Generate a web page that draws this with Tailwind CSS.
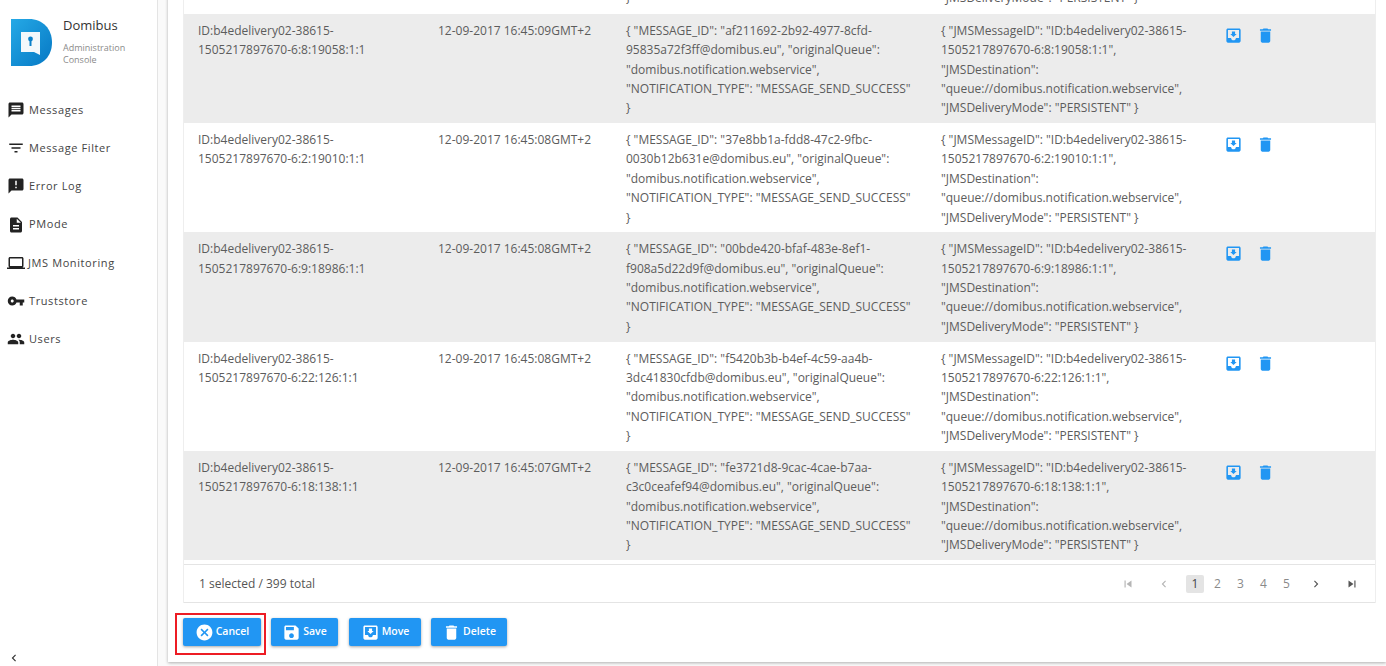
<!DOCTYPE html>
<html lang="en">

<head>
    <meta charset="UTF-8">
    <title>Domibus - JMS Monitoring</title>
    <script src="https://cdn.jsdelivr.net/npm/@tailwindcss/browser@4"></script>
</head>

<body class="flex h-screen overflow-hidden bg-white font-['Open_Sans',sans-serif] text-[12px] text-[#5c5c5c]">
    <!-- sidebar -->
    <aside class="flex flex-col w-[158px] shrink-0 h-full bg-white border-r border-[#e4e4e4]">
        <div class="flex pl-[11px] pt-[19px] h-[91px]">
            <svg class="w-[41px] h-[47px] shrink-0" viewBox="0 0 41 47">
                <defs>
                    <linearGradient id="logo" x1="0" y1="0" x2="1" y2="1">
                        <stop offset="0" stop-color="#25a9e6" />
                        <stop offset="1" stop-color="#0678c4" />
                    </linearGradient>
                </defs>
                <path d="M0 0H18C32 0 41 10 41 23.5S32 47 18 47H0Z" fill="url(#logo)" />
                <path d="M10 13H29V36L23 33H10Z" fill="#f4f8fb" />
                <circle cx="19.5" cy="20" r="2.4" fill="#0b80c9" />
                <rect x="18.5" y="21" width="2" height="6" fill="#0b80c9" />
            </svg>
            <div class="ml-[11px]">
                <p class="text-[13px] leading-[16px] mt-[-2px] text-[#333]">Domibus</p>
                <p class="text-[9px] leading-[12px] mt-[9px] text-[#8a8a8a]">Administration<br>Console</p>
            </div>
        </div>
        <nav class="flex flex-col text-[11px] tracking-[0.6px] text-[#444]">
            <a class="flex items-center h-[38.2px] pl-[7px] gap-[4px]"><svg class="w-[18px] h-[18px] fill-[#222]" viewBox="0 0 24 24"><path d="M20 2H4c-1.1 0-1.99.9-1.99 2L2 22l4-4h14c1.1 0 2-.9 2-2V4c0-1.1-.9-2-2-2zm-2 12H6v-2h12v2zm0-3H6V9h12v2zm0-3H6V6h12v2z" /></svg>Messages</a>
            <a class="flex items-center h-[38.2px] pl-[7px] gap-[4px]"><svg class="w-[18px] h-[18px] fill-[#222]" viewBox="0 0 24 24"><path d="M10 18h4v-2h-4v2zM3 6v2h18V6H3zm3 7h12v-2H6v2z" /></svg>Message Filter</a>
            <a class="flex items-center h-[38.2px] pl-[7px] gap-[4px]"><svg class="w-[18px] h-[18px] fill-[#222]" viewBox="0 0 24 24"><path d="M20 2H4c-1.1 0-1.99.9-1.99 2L2 22l4-4h14c1.1 0 2-.9 2-2V4c0-1.1-.9-2-2-2zm-7 9h-2V5h2v6zm0 4h-2v-2h2v2z" /></svg>Error Log</a>
            <a class="flex items-center h-[38.2px] pl-[7px] gap-[4px]"><svg class="w-[18px] h-[18px] fill-[#222]" viewBox="0 0 24 24"><path d="M14 2H6c-1.1 0-1.99.9-1.99 2L4 20c0 1.1.89 2 1.99 2H18c1.1 0 2-.9 2-2V8l-6-6zm2 16H8v-2h8v2zm0-4H8v-2h8v2zm-3-5V3.5L18.5 9H13z" /></svg>PMode</a>
            <a class="flex items-center h-[38.2px] pl-[7px] gap-[3px]"><svg class="w-[18px] h-[18px] fill-[#222]" viewBox="0 0 24 24"><path d="M20 18c1.1 0 1.99-.9 1.99-2L22 6c0-1.1-.9-2-2-2H4c-1.1 0-2 .9-2 2v10c0 1.1.9 2 2 2H0v2h24v-2h-4zM4 6h16v10H4V6z" /></svg>JMS Monitoring</a>
            <a class="flex items-center h-[38.2px] pl-[7px] gap-[4px]"><svg class="w-[18px] h-[18px] fill-[#222]" viewBox="0 0 24 24"><path d="M12.65 10C11.83 7.67 9.61 6 7 6c-3.31 0-6 2.69-6 6s2.69 6 6 6c2.61 0 4.83-1.67 5.65-4H17v4h4v-4h2v-4H12.65zM7 14c-1.1 0-2-.9-2-2s.9-2 2-2 2 .9 2 2-.9 2-2 2z" /></svg>Truststore</a>
            <a class="flex items-center h-[38.2px] pl-[7px] gap-[4px]"><svg class="w-[18px] h-[18px] fill-[#222]" viewBox="0 0 24 24"><path d="M16 11c1.66 0 2.99-1.34 2.99-3S17.66 5 16 5c-1.66 0-3 1.34-3 3s1.34 3 3 3zm-8 0c1.66 0 2.99-1.34 2.99-3S9.66 5 8 5C6.34 5 5 6.34 5 8s1.34 3 3 3zm0 2c-2.33 0-7 1.17-7 3.5V19h14v-2.5c0-2.33-4.67-3.5-7-3.5zm8 0c-.29 0-.62.02-.97.05 1.16.84 1.97 1.97 1.97 3.45V19h6v-2.5c0-2.33-4.67-3.5-7-3.5z" /></svg>Users</a>
        </nav>
        <div class="mt-auto pl-[7px] pb-[1px]">
            <svg class="w-[14px] h-[14px] fill-[#333]" viewBox="0 0 24 24"><path d="M15.41 7.41L14 6l-6 6 6 6 1.41-1.41L10.83 12z" /></svg>
        </div>
    </aside>

    <!-- content, scrolled to the bottom -->
    <main class="flex-1 min-w-0 flex flex-col justify-end pl-[10px] pb-[4px] bg-[#fafafa]">
        <div class="bg-white shadow-[0_1px_3px_rgba(0,0,0,0.3)] pl-[15px] pr-[10px] pb-[16px]">
            <div class="border-l border-r border-[#eeeeee] leading-[19.4px]">
                <div class="grid grid-cols-[239px_188px_315px_286px_1fr] h-[25.5px] pb-[6px] items-end">
                    <div></div>
                    <div></div>
                    <div class="px-[15px]">}</div>
                    <div class="px-[15px] whitespace-nowrap">"JMSDeliveryMode": "PERSISTENT" }</div>
                    <div></div>
                </div>

                <div class="grid grid-cols-[239px_188px_315px_286px_1fr] pt-[7px] h-[109.25px] bg-[#ececec]">
                    <div class="pl-[14px]">ID:b4edelivery02-38615-<br>1505217897670-6:8:19058:1:1</div>
                    <div class="px-[15px]">12-09-2017 16:45:09GMT+2</div>
                    <div class="px-[15px]">{ "MESSAGE_ID": "af211692-2b92-4977-8cfd-<br>95835a72f3ff@domibus.eu", "originalQueue":<br>"domibus.notification.webservice",<br>"NOTIFICATION_TYPE": "MESSAGE_SEND_SUCCESS"<br>}</div>
                    <div class="px-[15px]">{ "JMSMessageID": "ID:b4edelivery02-38615-<br>1505217897670-6:8:19058:1:1",<br>"JMSDestination":<br>"queue://domibus.notification.webservice",<br>"JMSDeliveryMode": "PERSISTENT" }</div>
                    <div class="flex gap-[13px] pl-[12px] pt-[5px]">
                        <svg class="w-[19px] h-[19px] fill-[#2196f3]" viewBox="0 0 24 24"><path d="M19 3H4.99c-1.11 0-1.98.9-1.98 2L3 19c0 1.1.88 2 1.99 2H19c1.1 0 2-.9 2-2V5c0-1.1-.9-2-2-2zm0 12h-4c0 1.66-1.35 3-3 3s-3-1.34-3-3H4.99V5H19v10zm-3-5h-2V7h-4v3H8l4 4 4-4z" /></svg>
                        <svg class="w-[19px] h-[19px] fill-[#2196f3]" viewBox="0 0 24 24"><path d="M6 19c0 1.1.9 2 2 2h8c1.1 0 2-.9 2-2V7H6v12zM19 4h-3.5l-1-1h-5l-1 1H5v2h14V4z" /></svg>
                    </div>
                </div>

                <div class="grid grid-cols-[239px_188px_315px_286px_1fr] pt-[7px] h-[109.25px] bg-white">
                    <div class="pl-[14px]">ID:b4edelivery02-38615-<br>1505217897670-6:2:19010:1:1</div>
                    <div class="px-[15px]">12-09-2017 16:45:08GMT+2</div>
                    <div class="px-[15px]">{ "MESSAGE_ID": "37e8bb1a-fdd8-47c2-9fbc-<br>0030b12b631e@domibus.eu", "originalQueue":<br>"domibus.notification.webservice",<br>"NOTIFICATION_TYPE": "MESSAGE_SEND_SUCCESS"<br>}</div>
                    <div class="px-[15px]">{ "JMSMessageID": "ID:b4edelivery02-38615-<br>1505217897670-6:2:19010:1:1",<br>"JMSDestination":<br>"queue://domibus.notification.webservice",<br>"JMSDeliveryMode": "PERSISTENT" }</div>
                    <div class="flex gap-[13px] pl-[12px] pt-[5px]">
                        <svg class="w-[19px] h-[19px] fill-[#2196f3]" viewBox="0 0 24 24"><path d="M19 3H4.99c-1.11 0-1.98.9-1.98 2L3 19c0 1.1.88 2 1.99 2H19c1.1 0 2-.9 2-2V5c0-1.1-.9-2-2-2zm0 12h-4c0 1.66-1.35 3-3 3s-3-1.34-3-3H4.99V5H19v10zm-3-5h-2V7h-4v3H8l4 4 4-4z" /></svg>
                        <svg class="w-[19px] h-[19px] fill-[#2196f3]" viewBox="0 0 24 24"><path d="M6 19c0 1.1.9 2 2 2h8c1.1 0 2-.9 2-2V7H6v12zM19 4h-3.5l-1-1h-5l-1 1H5v2h14V4z" /></svg>
                    </div>
                </div>

                <div class="grid grid-cols-[239px_188px_315px_286px_1fr] pt-[7px] h-[109.25px] bg-[#ececec]">
                    <div class="pl-[14px]">ID:b4edelivery02-38615-<br>1505217897670-6:9:18986:1:1</div>
                    <div class="px-[15px]">12-09-2017 16:45:08GMT+2</div>
                    <div class="px-[15px]">{ "MESSAGE_ID": "00bde420-bfaf-483e-8ef1-<br>f908a5d22d9f@domibus.eu", "originalQueue":<br>"domibus.notification.webservice",<br>"NOTIFICATION_TYPE": "MESSAGE_SEND_SUCCESS"<br>}</div>
                    <div class="px-[15px]">{ "JMSMessageID": "ID:b4edelivery02-38615-<br>1505217897670-6:9:18986:1:1",<br>"JMSDestination":<br>"queue://domibus.notification.webservice",<br>"JMSDeliveryMode": "PERSISTENT" }</div>
                    <div class="flex gap-[13px] pl-[12px] pt-[5px]">
                        <svg class="w-[19px] h-[19px] fill-[#2196f3]" viewBox="0 0 24 24"><path d="M19 3H4.99c-1.11 0-1.98.9-1.98 2L3 19c0 1.1.88 2 1.99 2H19c1.1 0 2-.9 2-2V5c0-1.1-.9-2-2-2zm0 12h-4c0 1.66-1.35 3-3 3s-3-1.34-3-3H4.99V5H19v10zm-3-5h-2V7h-4v3H8l4 4 4-4z" /></svg>
                        <svg class="w-[19px] h-[19px] fill-[#2196f3]" viewBox="0 0 24 24"><path d="M6 19c0 1.1.9 2 2 2h8c1.1 0 2-.9 2-2V7H6v12zM19 4h-3.5l-1-1h-5l-1 1H5v2h14V4z" /></svg>
                    </div>
                </div>

                <div class="grid grid-cols-[239px_188px_315px_286px_1fr] pt-[7px] h-[109.25px] bg-white">
                    <div class="pl-[14px]">ID:b4edelivery02-38615-<br>1505217897670-6:22:126:1:1</div>
                    <div class="px-[15px]">12-09-2017 16:45:08GMT+2</div>
                    <div class="px-[15px]">{ "MESSAGE_ID": "f5420b3b-b4ef-4c59-aa4b-<br>3dc41830cfdb@domibus.eu", "originalQueue":<br>"domibus.notification.webservice",<br>"NOTIFICATION_TYPE": "MESSAGE_SEND_SUCCESS"<br>}</div>
                    <div class="px-[15px]">{ "JMSMessageID": "ID:b4edelivery02-38615-<br>1505217897670-6:22:126:1:1",<br>"JMSDestination":<br>"queue://domibus.notification.webservice",<br>"JMSDeliveryMode": "PERSISTENT" }</div>
                    <div class="flex gap-[13px] pl-[12px] pt-[5px]">
                        <svg class="w-[19px] h-[19px] fill-[#2196f3]" viewBox="0 0 24 24"><path d="M19 3H4.99c-1.11 0-1.98.9-1.98 2L3 19c0 1.1.88 2 1.99 2H19c1.1 0 2-.9 2-2V5c0-1.1-.9-2-2-2zm0 12h-4c0 1.66-1.35 3-3 3s-3-1.34-3-3H4.99V5H19v10zm-3-5h-2V7h-4v3H8l4 4 4-4z" /></svg>
                        <svg class="w-[19px] h-[19px] fill-[#2196f3]" viewBox="0 0 24 24"><path d="M6 19c0 1.1.9 2 2 2h8c1.1 0 2-.9 2-2V7H6v12zM19 4h-3.5l-1-1h-5l-1 1H5v2h14V4z" /></svg>
                    </div>
                </div>

                <div class="grid grid-cols-[239px_188px_315px_286px_1fr] pt-[7px] h-[109.25px] bg-[#ececec]">
                    <div class="pl-[14px]">ID:b4edelivery02-38615-<br>1505217897670-6:18:138:1:1</div>
                    <div class="px-[15px]">12-09-2017 16:45:07GMT+2</div>
                    <div class="px-[15px]">{ "MESSAGE_ID": "fe3721d8-9cac-4cae-b7aa-<br>c3c0ceafef94@domibus.eu", "originalQueue":<br>"domibus.notification.webservice",<br>"NOTIFICATION_TYPE": "MESSAGE_SEND_SUCCESS"<br>}</div>
                    <div class="px-[15px]">{ "JMSMessageID": "ID:b4edelivery02-38615-<br>1505217897670-6:18:138:1:1",<br>"JMSDestination":<br>"queue://domibus.notification.webservice",<br>"JMSDeliveryMode": "PERSISTENT" }</div>
                    <div class="flex gap-[13px] pl-[12px] pt-[5px]">
                        <svg class="w-[19px] h-[19px] fill-[#2196f3]" viewBox="0 0 24 24"><path d="M19 3H4.99c-1.11 0-1.98.9-1.98 2L3 19c0 1.1.88 2 1.99 2H19c1.1 0 2-.9 2-2V5c0-1.1-.9-2-2-2zm0 12h-4c0 1.66-1.35 3-3 3s-3-1.34-3-3H4.99V5H19v10zm-3-5h-2V7h-4v3H8l4 4 4-4z" /></svg>
                        <svg class="w-[19px] h-[19px] fill-[#2196f3]" viewBox="0 0 24 24"><path d="M6 19c0 1.1.9 2 2 2h8c1.1 0 2-.9 2-2V7H6v12zM19 4h-3.5l-1-1h-5l-1 1H5v2h14V4z" /></svg>
                    </div>
                </div>

                <div class="h-[4px]"></div>

                <!-- table footer -->
                <div class="flex items-center h-[39px] border-t border-b border-[#e4e4e4] pl-[15px] pr-[16px]">
                    <span class="text-[#555]">1 selected / 399 total</span>
                    <div class="ml-auto flex items-center text-[#8a8a8a]">
                        <svg class="w-[14px] h-[14px] fill-[#b5b5b5] mr-[22px]" viewBox="0 0 24 24"><path d="M6 6h2v12H6zm3.5 6l8.5 6V6z" /></svg>
                        <svg class="w-[14px] h-[14px] fill-[#b5b5b5] mr-[15px]" viewBox="0 0 24 24"><path d="M15.41 7.41L14 6l-6 6 6 6 1.41-1.41L10.83 12z" /></svg>
                        <span class="w-[18px] h-[18px] rounded-[2px] bg-[#e4e4e4] text-[#444] text-center leading-[18px]">1</span>
                        <span class="w-[23px] text-center ml-[2px]">2</span>
                        <span class="w-[23px] text-center">3</span>
                        <span class="w-[23px] text-center">4</span>
                        <span class="w-[23px] text-center">5</span>
                        <svg class="w-[14px] h-[14px] fill-[#555] ml-[11px]" viewBox="0 0 24 24"><path d="M10 6L8.59 7.41 13.17 12l-4.58 4.58L10 18l6-6z" /></svg>
                        <svg class="w-[14px] h-[14px] fill-[#555] ml-[22px]" viewBox="0 0 24 24"><path d="M6 18l8.5-6L6 6v12zM16 6v12h2V6h-2z" /></svg>
                    </div>
                </div>
            </div>

            <!-- buttons -->
            <div class="flex mt-[15px] text-white text-[10.5px] font-semibold">
                <button class="relative flex items-center justify-center gap-[2px] w-[78px] h-[28px] rounded-[2px] bg-[#2196f3] shadow-[0_1px_3px_rgba(0,0,0,0.35)]">
                    <svg class="w-[19px] h-[19px] fill-white" viewBox="0 0 24 24"><path d="M12 2C6.47 2 2 6.47 2 12s4.47 10 10 10 10-4.47 10-10S17.53 2 12 2zm5 13.59L15.59 17 12 13.41 8.41 17 7 15.59 10.59 12 7 8.41 8.41 7 12 10.59 15.59 7 17 8.41 13.41 12 17 15.59z" /></svg>
                    Cancel
                    <span class="absolute left-[-8px] top-[-5px] w-[91px] h-[42px] border-2 border-[#ed1c24]"></span>
                </button>
                <button class="flex items-center justify-center gap-[2px] w-[67px] h-[28px] ml-[10px] rounded-[2px] bg-[#2196f3] shadow-[0_1px_3px_rgba(0,0,0,0.35)]">
                    <svg class="w-[19px] h-[19px] fill-white" viewBox="0 0 24 24"><path d="M17 3H5c-1.11 0-2 .9-2 2v14c0 1.1.89 2 2 2h14c1.1 0 2-.9 2-2V7l-4-4zm-5 16c-1.66 0-3-1.34-3-3s1.34-3 3-3 3 1.34 3 3-1.34 3-3 3zm3-10H5V5h10v4z" /></svg>
                    Save
                </button>
                <button class="flex items-center justify-center gap-[2px] w-[72px] h-[28px] ml-[11px] rounded-[2px] bg-[#2196f3] shadow-[0_1px_3px_rgba(0,0,0,0.35)]">
                    <svg class="w-[19px] h-[19px] fill-white" viewBox="0 0 24 24"><path d="M19 3H4.99c-1.11 0-1.98.9-1.98 2L3 19c0 1.1.88 2 1.99 2H19c1.1 0 2-.9 2-2V5c0-1.1-.9-2-2-2zm0 12h-4c0 1.66-1.35 3-3 3s-3-1.34-3-3H4.99V5H19v10zm-3-5h-2V7h-4v3H8l4 4 4-4z" /></svg>
                    Move
                </button>
                <button class="flex items-center justify-center gap-[2px] w-[76px] h-[28px] ml-[10px] rounded-[2px] bg-[#2196f3] shadow-[0_1px_3px_rgba(0,0,0,0.35)]">
                    <svg class="w-[19px] h-[19px] fill-white" viewBox="0 0 24 24"><path d="M6 19c0 1.1.9 2 2 2h8c1.1 0 2-.9 2-2V7H6v12zM19 4h-3.5l-1-1h-5l-1 1H5v2h14V4z" /></svg>
                    Delete
                </button>
            </div>
        </div>
    </main>
</body>

</html>
